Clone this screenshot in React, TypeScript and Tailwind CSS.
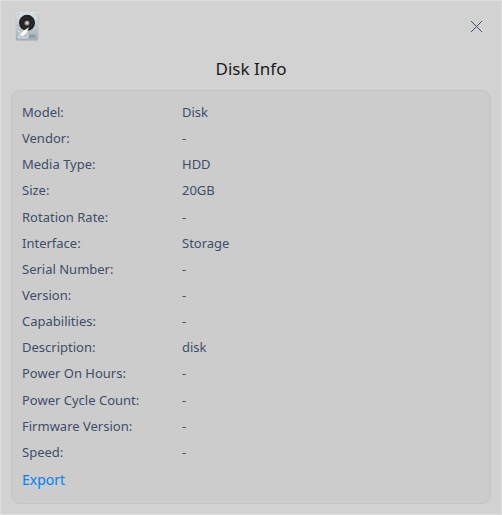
const rows: [string, string][] = [
  ['Model:', 'Disk'],
  ['Vendor:', '-'],
  ['Media Type:', 'HDD'],
  ['Size:', '20GB'],
  ['Rotation Rate:', '-'],
  ['Interface:', 'Storage'],
  ['Serial Number:', '-'],
  ['Version:', '-'],
  ['Capabilities:', '-'],
  ['Description:', 'disk'],
  ['Power On Hours:', '-'],
  ['Power Cycle Count:', '-'],
  ['Firmware Version:', '-'],
  ['Speed:', '-'],
];

function DiskIcon() {
  return (
    <svg width="32" height="32" viewBox="0 0 32 32" aria-hidden="true">
      <defs>
        <linearGradient id="case" x1="0" y1="0" x2="0" y2="1">
          <stop offset="0" stopColor="#dbe2e6" />
          <stop offset="1" stopColor="#a3b1ba" />
        </linearGradient>
      </defs>
      <rect x="4.8" y="3" width="22.6" height="27.8" rx="2" fill="#aeb3b6" />
      <rect x="5" y="2.2" width="22" height="27.8" rx="2" fill="url(#case)" />
      <g fill="#a1aaaf">
        <circle cx="7.3" cy="4.3" r=".7" />
        <circle cx="24.7" cy="4.3" r=".7" />
        <circle cx="6.7" cy="15.5" r=".6" />
        <circle cx="25.4" cy="15.5" r=".6" />
      </g>
      <circle cx="16" cy="12.8" r="8" fill="#231f20" />
      <circle cx="16" cy="12.8" r="5.3" fill="none" stroke="#3d393a" strokeWidth=".7" />
      <circle cx="16" cy="13" r="2.6" fill="#8f8a8b" />
      <circle cx="16" cy="13" r="1.3" fill="#d8d3d3" />
      <path d="M6.6 20.8l2.6 1.5-.4 2-1.8 3.5h9.4l.6-3.2-1.2-1.8 1-2" fill="#b7c3ca" stroke="#e3eaed" strokeWidth=".8" />
      <path d="M18.2 17.2l-6.2 3.8-2.4 3.7 2.2 1.4 3-2.5z" fill="#fff" />
      <circle cx="11" cy="24.6" r="1.4" fill="#fff" />
      <path d="M18 24.5h6.4v3.2H18z" fill="#8b979e" />
      <path d="M20 24.5v3.2m2-3.2v3.2" stroke="#a3aeb4" strokeWidth=".5" />
    </svg>
  );
}

export default function App() {
  return (
    <div className="flex h-[515px] w-[502px] flex-col border border-[#dedede] bg-[#d2d2d2] font-['Noto_Sans',sans-serif] text-[13px] text-[#414d68]">
      <header className="flex h-[50px] shrink-0 items-center justify-between pr-[19px] pl-[10px]">
        <DiskIcon />
        <button aria-label="Close" className="flex h-[11px] w-[11px]">
          <svg width="11" height="11" viewBox="0 0 11 11" stroke="#414d68" strokeWidth="1">
            <path d="M0 0L11 11M11 0L0 11" />
          </svg>
        </button>
      </header>
      <h1 className="h-[39px] shrink-0 pt-[5px] text-center text-[17px] leading-[26px] text-[#1a1a1a]">Disk Info</h1>
      <main className="mx-[10px] h-[414px] rounded-[9px] border border-[#c4c4c4] bg-[#cccccc] px-[10px] pt-[8.7px]">
        <dl>
          {rows.map(([label, value]) => (
            <div key={label} className="flex h-[26.15px] items-center">
              <dt className="w-[160px]">{label}</dt>
              <dd>{value}</dd>
            </div>
          ))}
        </dl>
        <button className="mt-[4.3px] block text-[14px] leading-[20px] text-[#0082fa]">Export</button>
      </main>
    </div>
  );
}
